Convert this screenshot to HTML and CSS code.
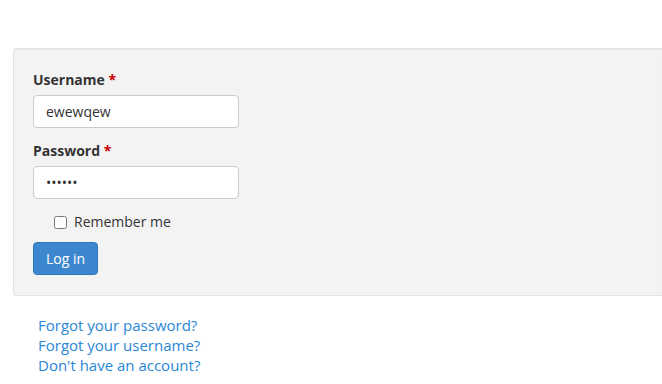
FILE: index.html
```html
<!DOCTYPE html>
<html lang="en">

<head>
    <meta charset="UTF-8">
    <meta name="viewport" content="width=device-width, initial-scale=1.0">
    <title>Login</title>
    <link rel="stylesheet" href="styles.css">
</head>

<body>
    <form class="login-well">
        <div class="field">
            <label for="username">Username <span class="star">*</span></label>
            <input type="text" id="username" class="text-input" value="ewewqew">
        </div>
        <div class="field">
            <label for="password">Password <span class="star">*</span></label>
            <input type="password" id="password" class="text-input" value="123456">
        </div>
        <div class="remember">
            <input type="checkbox" id="remember">
            <label for="remember">Remember me</label>
        </div>
        <button type="button" class="btn-login">Log in</button>
    </form>

    <ul class="login-links">
        <li><a href="#">Forgot your password?</a></li>
        <li><a href="#">Forgot your username?</a></li>
        <li><a href="#">Don't have an account?</a></li>
    </ul>
</body>

</html>
```

FILE: styles.css
```css
* {
    box-sizing: border-box;
}

body {
    margin: 0;
    font-family: "Open Sans", "Liberation Sans", sans-serif;
    font-size: 14px;
    line-height: 20px;
    color: #333;
    background-color: #fff;
}

.login-well {
    margin: 48px 0 0 13px;
    padding: 21px 19px 20px 19px;
    background-color: #f3f3f3;
    border: 1px solid #e3e3e3;
    border-right: none;
    border-radius: 4px 0 0 4px;
    box-shadow: inset 0 1px 1px rgba(0, 0, 0, 0.05);
}

.field {
    margin-bottom: 13px;
}

.field label {
    display: block;
    font-weight: bold;
    margin-bottom: 5px;
}

.star {
    color: #c00;
}

.text-input {
    display: block;
    width: 206px;
    height: 33px;
    padding: 0 12px;
    font-family: inherit;
    font-size: 14px;
    color: #333;
    background-color: #fff;
    border: 1px solid #ccc;
    border-radius: 4px;
}

.remember {
    display: flex;
    align-items: center;
    margin-left: 21px;
    height: 20px;
}

.remember input {
    margin: 0 7px 0 0;
    width: 13px;
    height: 13px;
}

.btn-login {
    margin-top: 10px;
    width: 65px;
    height: 33px;
    padding: 0;
    font-family: inherit;
    font-size: 14px;
    color: #fff;
    background-color: #3d87ce;
    border: 1px solid #2f78bb;
    border-radius: 4px;
}

.login-links {
    list-style: none;
    margin: 19px 0 0 38px;
    padding: 0;
    font-size: 15px;
}

.login-links a {
    color: #2a86d6;
    text-decoration: none;
}
```
